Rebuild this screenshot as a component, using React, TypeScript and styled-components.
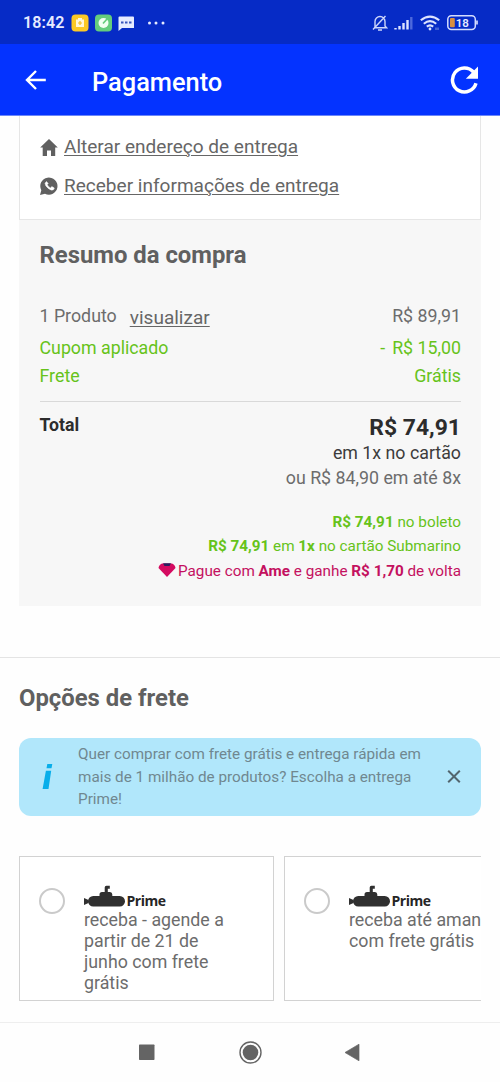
import React from 'react';
import styled, { createGlobalStyle } from 'styled-components';

const GlobalStyle = createGlobalStyle`
  * { box-sizing: border-box; }
  html, body { margin: 0; padding: 0; background: #fefefe; }
  body { font-family: Roboto, 'Liberation Sans', sans-serif; color: #666; }
  svg { display: block; flex: none; }
`;

const Screen = styled.div`
  width: 500px;
  height: 1082px;
  display: flex;
  flex-direction: column;
  overflow: hidden;
  background: #fefefe;
`;

const StatusBar = styled.div`
  height: 44px;
  flex: none;
  display: flex;
  align-items: center;
  justify-content: space-between;
  padding: 1px 20px 0 23px;
  background: #062bc6;
  color: #e6ebff;
`;

const StatusGroup = styled.div<{ $gap: number }>`
  display: flex;
  align-items: center;
  gap: ${(p) => p.$gap}px;
`;

const Clock = styled.span`
  font-size: 16px;
  font-weight: 600;
  letter-spacing: 0.1px;
  line-height: 20px;
  width: 42px;
  white-space: nowrap;
`;

const AppBar = styled.header`
  height: 72px;
  flex: none;
  display: flex;
  align-items: center;
  padding: 1px 21px 0 25px;
  background: #0433ff;
  border-bottom: 1px solid #6c87f8;
  color: #fff;
`;

const BarTitle = styled.h1`
  flex: 1;
  margin: 3px 0 0 45px;
  font-size: 25.4px;
  line-height: 30px;
  font-weight: 500;
`;

const Content = styled.main`
  flex: 1;
  min-height: 0;
  overflow: hidden;
`;

const AddressCard = styled.section`
  height: 104px;
  margin: 0 19px;
  padding: 11px 20px 0;
  border: 1px solid #e6e6e6;
  border-top: 0;
  background: #fff;
`;

const AddressRow = styled.div`
  height: 39px;
  display: flex;
  align-items: center;
  gap: 6px;
`;

const Link = styled.a`
  font-size: 19.05px;
  line-height: 24px;
  color: #666;
  text-decoration: underline;
  text-decoration-thickness: 1.3px;
  text-underline-offset: 2px;
  white-space: nowrap;
`;

const Summary = styled.section`
  height: 386px;
  margin: 0 19px;
  padding: 20px 20px 0 20.5px;
  background: #f7f7f7;
`;

const SectionTitle = styled.h2`
  margin: 0;
  font-size: 23.85px;
  line-height: 30px;
  font-weight: 700;
  color: #606060;
`;

const Lines = styled.div`
  padding: 32px 0 11px;
  border-bottom: 1px solid #d9d9d9;
`;

const Line = styled.div<{ $height: number; $green?: boolean }>`
  height: ${(p) => p.$height}px;
  display: flex;
  justify-content: space-between;
  font-size: 17.8px;
  line-height: 28px;
  color: ${(p) => (p.$green ? '#66c31a' : '#6c6c6c')};
`;

const ProductLabel = styled.div`
  display: flex;
  align-items: flex-start;
  gap: 13px;
`;

const ViewLink = styled.div`
  padding-top: 2px;
`;

const Discount = styled.span`
  display: flex;
  gap: 7px;
`;

const TotalRow = styled.div`
  display: flex;
  justify-content: space-between;
  padding-top: 11px;
`;

const TotalLabel = styled.strong`
  font-size: 17.7px;
  line-height: 25px;
  color: #2c2c2c;
`;

const TotalValues = styled.div`
  display: flex;
  flex-direction: column;
  align-items: flex-end;
`;

const TotalPrice = styled.strong`
  font-size: 22.9px;
  line-height: 30px;
  color: #2c2c2c;
`;

const Installment = styled.span<{ $strong?: boolean }>`
  font-size: 17.8px;
  line-height: ${(p) => (p.$strong ? 19 : 32)}px;
  color: ${(p) => (p.$strong ? '#3c3c3c' : '#6c6c6c')};
`;

const Offers = styled.div`
  display: flex;
  flex-direction: column;
  align-items: flex-end;
  padding-top: 15.5px;
`;

const Offer = styled.div<{ $color: string }>`
  display: flex;
  align-items: center;
  gap: 2px;
  font-size: 15.27px;
  line-height: 24.6px;
  color: ${(p) => p.$color};
`;

const Shipping = styled.section`
  margin-top: 51px;
  padding: 25px 19px 0;
  border-top: 1px solid #e4e4e4;
`;

const Notice = styled.div`
  height: 78px;
  margin-top: 25px;
  display: flex;
  align-items: center;
  padding: 0 20px 0 23px;
  border-radius: 12px;
  background: #b1e7fb;
`;

const NoticeText = styled.p`
  flex: 1;
  margin: 0 0 0 25px;
  font-size: 15.27px;
  line-height: 22.5px;
  color: #708790;
  white-space: nowrap;
`;

const Carousel = styled.div`
  display: flex;
  gap: 10px;
  margin-top: 40px;
  overflow: hidden;
`;

const OptionCard = styled.div`
  flex: none;
  width: 255px;
  height: 145px;
  display: flex;
  padding: 28px 19px 0;
  border: 1px solid #d2d2d2;
  background: #fff;
`;

const Radio = styled.span`
  flex: none;
  width: 26px;
  height: 26px;
  margin: 3px 19px 0 0;
  border: 2px solid #cacaca;
  border-radius: 50%;
`;

const Brand = styled.div`
  display: flex;
  align-items: flex-start;
  gap: 1.5px;
  height: 25px;
  color: #262626;
`;

const BrandName = styled.span`
  padding-top: 6px;
  font: 700 14px/20px 'Open Sans', sans-serif;
  letter-spacing: -0.5px;
`;

const OptionText = styled.p`
  margin: 0;
  font-size: 17.8px;
  line-height: 20.9px;
  color: #6c6c6c;
  white-space: nowrap;
`;

const NavBar = styled.nav`
  height: 60px;
  flex: none;
  display: flex;
  justify-content: center;
  align-items: center;
  gap: 79px;
  padding-right: 1px;
  border-top: 1px solid #eee;
`;

const Submarine = () => (
  <svg width="41" height="23" viewBox="0 0 41 23" fill="#303030">
    <rect x="4" y="11" width="37" height="10.500" rx="5.250" />
    <path d="M0 13l4.500 2v3L0 20z" />
    <path d="M15.500 12V9.500q0-2.500 2.500-2.500h2.700V2.500q0-1.700 1.700-1.700h3.400v3h-2V7H26q2.300 0 2.300 2.500V12z" />
  </svg>
);

const options = [
  ['receba - agende a', 'partir de 21 de', 'junho com frete', 'grátis'],
  ['receba até amanhã', 'com frete grátis'],
];

export default function App() {
  return (
    <Screen>
      <GlobalStyle />
      <StatusBar>
        <StatusGroup $gap={6}>
          <Clock>18:42</Clock>
          <svg width="18" height="18" viewBox="0 0 18 18">
            <rect x=".5" y=".5" width="17" height="17" rx="4" fill="#fbc926" />
            <path d="M5 5.500h2V4h4v1.500h2V13H5z" fill="#fff8da" />
            <path d="M9 7v4M7 9h4" stroke="#f3bd22" strokeWidth="1.200" />
          </svg>
          <svg width="17" height="18" viewBox="0 0 17 18">
            <rect y=".5" width="17" height="17" rx="4" fill="#65cd7c" />
            <circle cx="8.500" cy="9" r="5" fill="#f1fff1" />
            <path d="M8 9.500l4.500-5" stroke="#65cd7c" strokeWidth="1.700" />
          </svg>
          <svg width="17" height="18" viewBox="0 0 17 18">
            <path d="M1.500 2.500H15q1 0 1 1V14H4L.5 17V3.500q0-1 1-1z" fill="#e6ebff" />
            <path d="M3 8.500h2.500M7 8.500h2.500M11 8.500h2.500" stroke="#3957bd" strokeWidth="2" />
          </svg>
          <svg width="28" height="18" viewBox="0 0 28 18" fill="#e6ebff">
            <circle cx="8.500" cy="9" r="1.500" />
            <circle cx="15" cy="9" r="1.500" />
            <circle cx="22" cy="9" r="1.500" />
          </svg>
        </StatusGroup>
        <StatusGroup $gap={6}>
          <svg width="16" height="18" viewBox="0 0 16 18" fill="none" stroke="#cdd6fa" strokeWidth="1.400">
            <path d="M3 13.500V7.500a5 5 0 0 1 10 0V12l1.500 1.700H2M8 15.200v1.500M6 16h4M1 15.500L13.500 2" />
          </svg>
          <svg width="20" height="18" viewBox="0 0 20 18" strokeWidth="2.400">
            <path d="M1.500 15.500V14M5.500 15.500V12M9.500 15.500V9M13.500 15.500V6" stroke="#dce3ff" />
            <path d="M17.300 15.500V3" stroke="#4d69dc" />
          </svg>
          <svg width="21" height="18" viewBox="0 0 21 18" fill="none" stroke="#dce3ff" strokeWidth="2.100">
            <path d="M.8 6.300q9.200-7.500 18.400 0M3.800 9.700q6.200-5 12.400 0M6.800 12.700q3.200-2.500 6.400 0" />
            <circle cx="10" cy="15" r="1.400" fill="#dce3ff" stroke="none" />
            <path d="M16 13.500v2.500M18 13.500v2.500" strokeWidth="1" stroke="#8195e2" />
          </svg>
          <svg width="33" height="18" viewBox="0 0 33 18">
            <rect x=".8" y="1.700" width="27.500" height="13.800" rx="3.500" fill="none" stroke="#d4ddff" strokeWidth="1.500" />
            <path d="M30 6.500v4" stroke="#d4ddff" strokeWidth="1.700" />
            <rect x="3" y="4" width="4.800" height="9.200" rx="1" fill="#d99040" />
            <text x="8.800" y="12.700" fontSize="11.500" fontWeight="600" fill="#e6ebff">18</text>
          </svg>
        </StatusGroup>
      </StatusBar>

      <AppBar>
        <svg width="22" height="22" viewBox="0 0 22 22" fill="none" stroke="#fff" strokeWidth="2.400">
          <path d="M20.800 11H2.200M11 2L2 11l9 9" />
        </svg>
        <BarTitle>Pagamento</BarTitle>
        <svg width="29" height="30" viewBox="0 0 29 30">
          <path d="M26 18.300A12 12 0 1 1 23.500 7" fill="none" stroke="#fff" strokeWidth="3.500" />
          <path d="M28 1.500v12.200H15.800z" fill="#fff" />
        </svg>
      </AppBar>

      <Content>
        <AddressCard>
          <AddressRow>
            <svg width="18" height="20" viewBox="0 0 18 20" fill="#606060">
              <path d="M9 2l8.800 8.500h-2.600V19H11v-5.500H7V19H2.700v-8.500H.2z" />
            </svg>
            <Link>Alterar endereço de entrega</Link>
          </AddressRow>
          <AddressRow>
            <svg width="18" height="20" viewBox="0 0 18 20">
              <path d="M0 19l1.300-4.800A8.600 8.600 0 1 1 5 17.800z" fill="#606060" />
              <path d="M6.500 5.500L5 7.200q0 2.500 3.300 5.200t5.300 1.200l.7-1.500-2.400-1.500-1.500 1.300Q8.500 11 7.200 8.700l1-1.200z" fill="#fff" stroke="#fff" strokeWidth=".5" />
            </svg>
            <Link>Receber informações de entrega</Link>
          </AddressRow>
        </AddressCard>

        <Summary>
          <SectionTitle>Resumo da compra</SectionTitle>
          <Lines>
            <Line $height={32}>
              <ProductLabel>
                <span>1 Produto</span>
                <ViewLink><Link>visualizar</Link></ViewLink>
              </ProductLabel>
              <span>R$ 89,91</span>
            </Line>
            <Line $height={28} $green>
              <span>Cupom aplicado</span>
              <Discount><span>-</span><span>R$ 15,00</span></Discount>
            </Line>
            <Line $height={28} $green>
              <span>Frete</span>
              <span>Grátis</span>
            </Line>
          </Lines>
          <TotalRow>
            <TotalLabel>Total</TotalLabel>
            <TotalValues>
              <TotalPrice>R$ 74,91</TotalPrice>
              <Installment $strong>em 1x no cartão</Installment>
              <Installment>ou R$ 84,90 em até 8x</Installment>
            </TotalValues>
          </TotalRow>
          <Offers>
            <Offer $color="#66c31a"><span><b>R$ 74,91</b> no boleto</span></Offer>
            <Offer $color="#66c31a"><span><b>R$ 74,91</b> em <b>1x</b> no cartão Submarino</span></Offer>
            <Offer $color="#c4115f">
              <svg width="18" height="18" viewBox="0 0 18 18">
                <path d="M4 1.500h10q3 1 3.500 4.500L9 15 .5 6Q1 2.500 4 1.500z" fill="#d40b60" />
                <path d="M5 1.300h8l-1.500 2.700h-5z" fill="#28205f" />
              </svg>
              <span>Pague com <b>Ame</b> e ganhe <b>R$ 1,70</b> de volta</span>
            </Offer>
          </Offers>
        </Summary>

        <Shipping>
          <SectionTitle>Opções de frete</SectionTitle>
          <Notice>
            <svg width="11" height="28" viewBox="0 0 11 28" fill="#08aeea">
              <path d="M5.300 1h5l-.8 4.200H4.500zM3.900 7.700h5.300L6.500 26H.6z" />
            </svg>
            <NoticeText>
              Quer comprar com frete grátis e entrega rápida em<br />
              mais de 1 milhão de produtos? Escolha a entrega<br />
              Prime!
            </NoticeText>
            <svg width="14" height="14" viewBox="0 0 14 14" stroke="#53666e" strokeWidth="2">
              <path d="M1.200.7l11.600 11.600M12.800.7L1.200 12.300" />
            </svg>
          </Notice>
          <Carousel>
            {options.map((lines) => (
              <OptionCard key={lines[0]}>
                <Radio />
                <div>
                  <Brand><Submarine /><BrandName>Prime</BrandName></Brand>
                  <OptionText>
                    {lines.map((l) => <React.Fragment key={l}>{l}<br /></React.Fragment>)}
                  </OptionText>
                </div>
              </OptionCard>
            ))}
          </Carousel>
        </Shipping>
      </Content>

      <NavBar>
        <svg width="24" height="24" viewBox="0 0 24 24"><rect x="4" y="3.500" width="15.500" height="15.500" rx=".7" fill="#646464" /></svg>
        <svg width="24" height="24" viewBox="0 0 24 24">
          <circle cx="12.500" cy="11.500" r="10.500" fill="none" stroke="#646464" strokeWidth="1.400" />
          <circle cx="12.500" cy="11.500" r="7.800" fill="#646464" />
        </svg>
        <svg width="24" height="24" viewBox="0 0 24 24"><path d="M4 11.500L18 3.200v16.600z" fill="#646464" stroke="#646464" strokeWidth=".7" strokeLinejoin="round" /></svg>
      </NavBar>
    </Screen>
  );
}
